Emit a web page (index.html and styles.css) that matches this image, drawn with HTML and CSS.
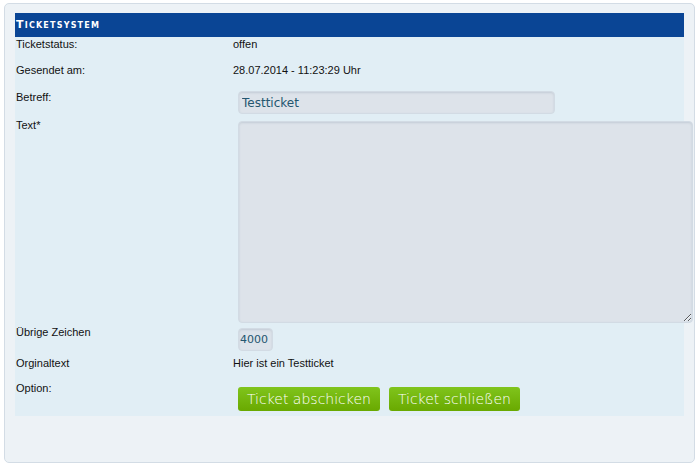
FILE: index.html
```html
<!DOCTYPE html>
<html lang="de">
<head>
    <meta charset="UTF-8">
    <title>Ticketsystem</title>
    <link rel="stylesheet" href="styles.css">
</head>
<body>
    <div class="box">
        <div class="panel">
            <h2 class="panel-title">Ticketsystem</h2>
            <div class="form">
                <div class="label row-status">Ticketstatus:</div>
                <div class="value row-status">offen</div>

                <div class="label row-date">Gesendet am:</div>
                <div class="value row-date">28.07.2014 - 11:23:29 Uhr</div>

                <div class="label row-subject">Betreff:</div>
                <div class="value row-subject"><input class="field subject" type="text" value="Testticket"></div>

                <div class="label row-text">Text*</div>
                <div class="value row-text"><textarea class="field message"></textarea></div>

                <div class="label row-count">Übrige Zeichen</div>
                <div class="value row-count"><input class="field counter" type="text" value="4000"></div>

                <div class="label row-orig">Orginaltext</div>
                <div class="value row-orig">Hier ist ein Testticket</div>

                <div class="label row-option">Option:</div>
                <div class="value row-option buttons">
                    <button class="btn">Ticket abschicken</button>
                    <button class="btn">Ticket schließen</button>
                </div>
            </div>
        </div>
    </div>
</body>
</html>
```
FILE: styles.css
```css
body {
    margin: 0;
    background: #ffffff;
    font-family: "Liberation Sans", Arial, sans-serif;
    font-size: 11px;
    color: #111111;
}

/* Outer rounded frame */
.box {
    margin: 3px 0 0 4px;
    width: 691px;
    height: 460px;
    background: #edf2f6;
    border: 1px solid #d3dce5;
    border-radius: 5px;
    padding: 9px 0 0 10px;
    box-sizing: border-box;
}

.panel {
    width: 669px;
    background: #e1eef5;
    padding-bottom: 5px;
}

.panel-title {
    margin: 0;
    height: 24px;
    line-height: 23px;
    background: #0a4595;
    color: #ffffff;
    font-family: "DejaVu Sans", Verdana, sans-serif;
    font-size: 11px;
    font-weight: bold;
    font-variant: small-caps;
    letter-spacing: 1.2px;
    padding-left: 1px;
}

.form {
    display: grid;
    grid-template-columns: 218px 1fr;
    padding-top: 1px;
}

.label {
    padding-left: 1px;
    line-height: 13px;
}

.value {
    line-height: 13px;
}

.row-status { height: 26px; }
.row-date { height: 27px; }
.row-subject { height: 28px; }
.row-text { height: 207px; }
.row-count { height: 31px; }
.row-orig { height: 25px; }
.row-option { height: 29px; }

.field {
    display: block;
    margin: 0 0 0 5px;
    background: #dde3ea;
    border: 1px solid #d2dbe4;
    border-radius: 4px;
    box-shadow: inset 0 1px 2px rgba(120, 140, 160, 0.25);
    font-family: "DejaVu Sans", Verdana, sans-serif;
    font-size: 12px;
    color: #24566f;
    box-sizing: border-box;
    outline: none;
}

.subject {
    width: 317px;
    height: 23px;
    padding: 0 3px;
}

.message {
    margin-top: 2px;
    width: 455px;
    height: 202px;
    resize: both;
}

.counter {
    margin-top: 2px;
    width: 35px;
    height: 23px;
    padding: 0 1px;
    font-size: 11px;
}

.buttons {
    display: flex;
    gap: 9px;
    padding-left: 5px;
}

.btn {
    margin-top: 5px;
    height: 24px;
    padding: 0 9px;
    border: none;
    border-radius: 3px;
    background: linear-gradient(#80c41c, #69a900);
    color: #ffffff;
    font-family: "DejaVu Sans", Verdana, sans-serif;
    font-size: 14px;
    font-weight: 300;
    cursor: pointer;
}
```
